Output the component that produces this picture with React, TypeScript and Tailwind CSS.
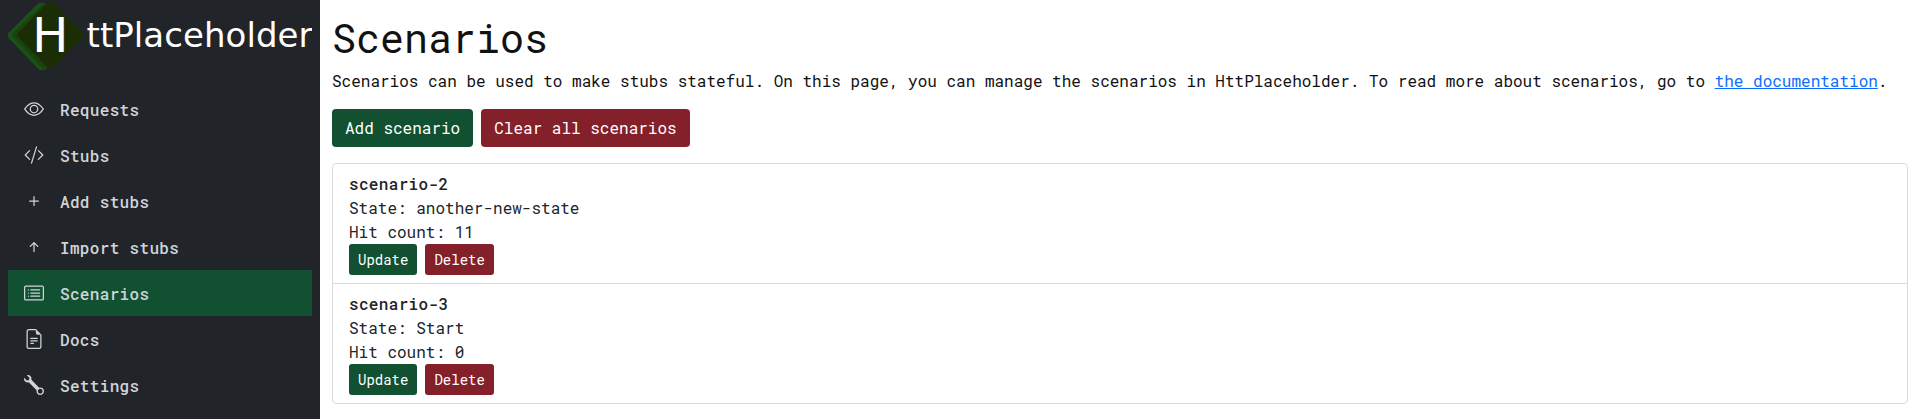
import {
  BsArrowUpShort,
  BsCardList,
  BsCodeSlash,
  BsEye,
  BsFileEarmarkText,
  BsPlus,
  BsWrench,
} from "react-icons/bs";
import type { IconType } from "react-icons";

const navItems: { label: string; icon: IconType; active?: boolean }[] = [
  { label: "Requests", icon: BsEye },
  { label: "Stubs", icon: BsCodeSlash },
  { label: "Add stubs", icon: BsPlus },
  { label: "Import stubs", icon: BsArrowUpShort },
  { label: "Scenarios", icon: BsCardList, active: true },
  { label: "Docs", icon: BsFileEarmarkText },
  { label: "Settings", icon: BsWrench },
];

const scenarios = [
  { name: "scenario-2", state: "another-new-state", hits: 11 },
  { name: "scenario-3", state: "Start", hits: 0 },
];

function Logo() {
  return (
    <svg className="block h-[78px] w-[304px]" viewBox="8 0 304 78">
      <path d="M38 4 L44 3 L52 36 L46 69 L40 70 L9 38 Q7 35 9 33 Z" fill="#1a5216" stroke="#1a5216" strokeLinejoin="round" />
      <path d="M43 4 L48 4 L52 36 L48 68 L43 69 L13 37 Q11 35 13 33 Z" fill="#1a420f" />
      <path d="M47 3 Q50 1 54 3 L83 33 Q85 35 83 37 L54 67 Q50 69 47 67 L18 37 Q16 35 18 33 Z" fill="#1a2d05" />
      <text x="32.3" y="52" className="fill-white font-['DejaVu_Sans',sans-serif] text-[48px]">H</text>
      <text x="86.5" y="47.3" textLength="226" className="fill-white font-['DejaVu_Sans',sans-serif] text-[34px]">ttPlaceholder</text>
    </svg>
  );
}

export default function App() {
  return (
    <div className="flex h-[419px] overflow-hidden bg-white font-['Roboto_Mono','DejaVu_Sans_Mono',monospace] text-base text-[#212529]">
      <aside className="w-80 shrink-0 bg-[#212529] px-2">
        <Logo />
        <nav className="pt-2">
          {navItems.map(({ label, icon: Icon, active }) => (
            <a
              key={label}
              className={`flex h-[46px] items-center gap-4 px-4 font-medium text-[#ced4da] ${active ? "bg-[#115132]" : ""}`}
            >
              <Icon className="size-5" />
              <span className="pt-0.5 leading-6 tracking-[0.33px]">{label}</span>
            </a>
          ))}
        </nav>
      </aside>
      <main className="min-w-0 flex-1 pt-3.5 pr-[7px] pl-3">
        <h1 className="mb-[7px] text-[40px] leading-[48px] text-[#111111]">Scenarios</h1>
        <p className="mb-4 leading-6 whitespace-nowrap text-[#111111]">
          Scenarios can be used to make stubs stateful. On this page, you can manage the scenarios in HttPlaceholder. To
          read more about scenarios, go to <a className="text-[#0d6efd] underline">the documentation</a>.
        </p>
        <div className="mb-4 flex gap-2">
          <button className="h-[38px] rounded bg-[#115132] px-[13px] text-white">Add scenario</button>
          <button className="h-[38px] rounded bg-[#842029] px-[13px] text-white">Clear all scenarios</button>
        </div>
        <ul className="divide-y divide-[#dbdbdb] rounded border border-[#dbdbdb]">
          {scenarios.map((scenario) => (
            <li key={scenario.name} className="px-4 py-2 leading-6">
              <div className="font-medium tracking-[0.33px]">{scenario.name}</div>
              <div>State: {scenario.state}</div>
              <div>Hit count: {scenario.hits}</div>
              <div className="flex gap-2">
                <button className="h-[31px] rounded-[3px] bg-[#115132] px-[9px] text-sm text-white">Update</button>
                <button className="h-[31px] rounded-[3px] bg-[#842029] px-[9px] text-sm text-white">Delete</button>
              </div>
            </li>
          ))}
        </ul>
      </main>
    </div>
  );
}
